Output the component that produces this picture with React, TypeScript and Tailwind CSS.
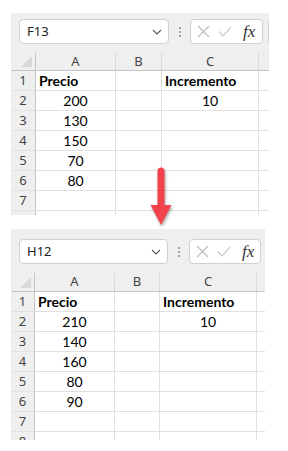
import React from 'react'

type SheetProps = {
	cellRef: string
	values: string[]
	top: string
	headH: string
	cols: string[]
	height: string
	width: string
	nameW: string
	fxW: string
}

const ui = "font-['Segoe_UI','Noto_Sans',sans-serif]"
const cellFont = "font-['Lato','Liberation_Sans',sans-serif]"

function FormulaBar({ cellRef, nameW, fxW }: { cellRef: string; nameW: string; fxW: string }) {
	return (
		<div className="flex items-center pl-2">
			<div className={`${nameW} h-[25px] shrink-0 flex items-center justify-between rounded-[4px] border border-[#d0d0d0] bg-white pl-[7px] pr-[6px]`}>
				<span className={`${ui} text-[13px] text-[#222]`}>{cellRef}</span>
				<svg width="10" height="6" viewBox="0 0 10 6" fill="none">
					<path d="M1 1l4 4 4-4" stroke="#555" strokeWidth="1.1" />
				</svg>
			</div>
			<div className="w-[21px] shrink-0 flex flex-col items-center gap-[2px]">
				<span className="w-[2px] h-[2px] bg-[#8a8a8a] rounded-full" />
				<span className="w-[2px] h-[2px] bg-[#8a8a8a] rounded-full" />
				<span className="w-[2px] h-[2px] bg-[#8a8a8a] rounded-full" />
			</div>
			<div className={`${fxW} h-[25px] shrink-0 flex items-center rounded-[4px] border border-[#d0d0d0] bg-white pl-[6px]`}>
				<svg width="13" height="13" viewBox="0 0 13 13" fill="none">
					<path d="M1 1l11 11M12 1L1 12" stroke="#bdbdbd" strokeWidth="1.1" />
				</svg>
				<svg className="ml-[8px]" width="14" height="11" viewBox="0 0 14 11" fill="none">
					<path d="M1 5.5l4 4.5L13 1" stroke="#bdbdbd" strokeWidth="1.1" />
				</svg>
				<span className="ml-[11px] font-['Liberation_Serif',serif] italic text-[17px] leading-none text-[#333]">fx</span>
			</div>
			<div className="ml-[5px] w-[6px] h-[25px] shrink-0 rounded-l-[4px] border border-r-0 border-[#d0d0d0] bg-white" />
		</div>
	)
}

function Sheet({ cellRef, values, top, headH, cols, height, width, nameW, fxW }: SheetProps) {
	const rows = [
		['Precio', '', 'Incremento'],
		[values[0], '', '10'],
		...values.slice(1).map((v) => [v, '', '']),
		['', '', ''],
		['', '', ''],
	]
	return (
		<div className={`${width} ${height} ml-[11px] overflow-hidden bg-[#efefef] flex flex-col`}>
			<div className={`${top} shrink-0`}>
				<FormulaBar cellRef={cellRef} nameW={nameW} fxW={fxW} />
			</div>
			<div className={`${headH} shrink-0 flex border-b border-[#c4c4c4]`}>
				<div className={`${cols[0]} relative border-r border-[#c4c4c4]`}>
					<svg className="absolute right-[3px] bottom-[3px]" width="11" height="11" viewBox="0 0 11 11">
						<path d="M11 0L11 11L0 11Z" fill="#d9d9d9" />
					</svg>
				</div>
				{['A', 'B', 'C'].map((c, i) => (
					<div key={c} className={`${cols[i + 1]} flex items-center justify-center border-r border-[#dadada] ${ui} text-[13px] text-[#444]`}>
						{c}
					</div>
				))}
				<div className="flex-1" />
			</div>
			{rows.map((r, i) => (
				<div key={i} className="h-[20px] shrink-0 flex">
					<div className={`${cols[0]} flex items-center justify-center border-r border-[#c4c4c4] border-b border-b-[#e2e2e2] ${ui} text-[13px] text-[#444]`}>
						{i + 1}
					</div>
					{r.map((v, j) => (
						<div
							key={j}
							className={`${cols[j + 1]} flex items-center bg-white border-r border-b border-[#e0e0e0] ${cellFont} text-[14px] text-black ${i === 0 ? 'font-bold justify-start pl-[3px]' : 'justify-center'}`}
						>
							{v}
						</div>
					))}
					<div className="flex-1 bg-white border-b border-[#e0e0e0]" />
				</div>
			))}
		</div>
	)
}

export default function App() {
	return (
		<div className="relative w-[288px] h-[451px] bg-white">
			<div className="pt-[13px]">
				<Sheet
					cellRef="F13"
					values={['200', '130', '150', '70', '80']}
					top="h-[40px] pt-[6px]"
					headH="h-[18px]"
					cols={['w-[25px]', 'w-[80px]', 'w-[46px]', 'w-[97px]']}
					height="h-[202px]"
					width="w-[258px]"
					nameW="w-[150px]"
					fxW="w-[73px]"
				/>
			</div>
			<div className="pt-[14px]">
				<Sheet
					cellRef="H12"
					values={['210', '140', '160', '80', '90']}
					top="h-[44px] pt-[10px]"
					headH="h-[19px]"
					cols={['w-[24px]', 'w-[80px]', 'w-[45px]', 'w-[97px]']}
					height="h-[211px]"
					width="w-[254px]"
					nameW="w-[149px]"
					fxW="w-[72px]"
				/>
			</div>
			<svg
				className="absolute left-[150px] top-[167px] drop-shadow-[1px_2px_1.5px_rgba(0,0,0,0.35)]"
				width="22"
				height="59"
				viewBox="0 0 22 59"
			>
				<path d="M7.5 4a3.5 3.5 0 0 1 7 0V39h-7Z" fill="#f2424b" />
				<path d="M0.5 38H21.5L11 58Z" fill="#f2424b" />
			</svg>
		</div>
	)
}
